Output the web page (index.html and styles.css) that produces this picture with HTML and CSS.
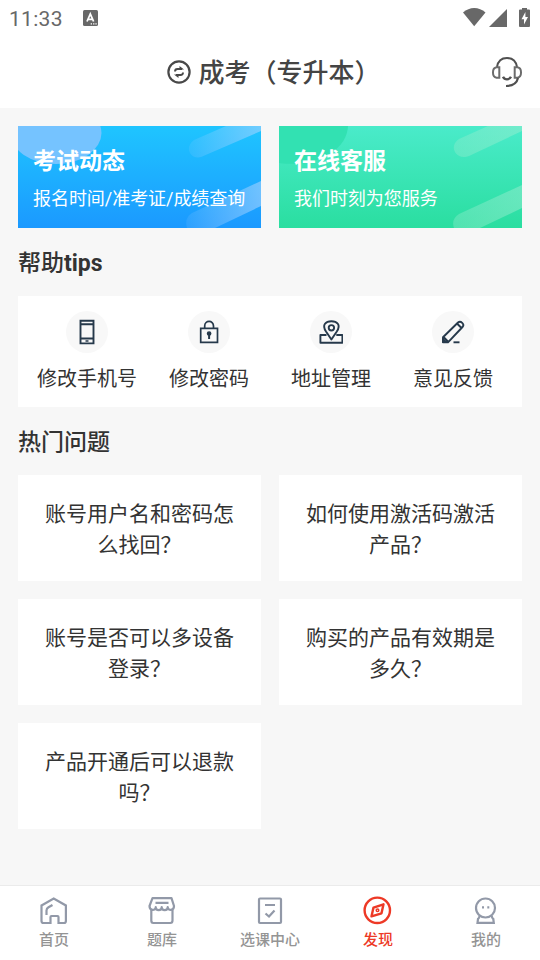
FILE: index.html
```html
<!DOCTYPE html>
<html lang="zh-CN">
<head>
<meta charset="utf-8">
<title>发现</title>
<link rel="stylesheet" href="styles.css">
</head>
<body>
<div class="app">
  <div class="status">
    <span class="time">11:33</span>
    <svg class="ime" width="15" height="16" viewBox="0 0 15 16"><rect width="15" height="16" rx="1.5" fill="#686868"/><path d="M4 11.5L7.3 4L10.6 11.5M5.2 9.3H9.4" fill="none" stroke="#fff" stroke-width="1.8"/><path d="M7.7 13.2h1.3v1.3H7.7zM10.1 13.2h1.3v1.3h-1.3zM12.4 13.2h1.3v1.3h-1.3z" fill="#fff"/></svg>
    <svg class="signals" width="68" height="20" viewBox="0 0 68 20" fill="#686868"><path d="M0 5.5C6.5-.5 16-.5 22.5 5.500L11.200 19.300z"/><path d="M44 2V20H26z"/><path d="M59 1h5v1.500h2q1 0 1 1V19q0 1-1 1h-9q-1 0-1-1V3.500q0-1 1-1h2z"/><path d="M62.400 5L58.500 12.200h2.500v5.300L65 10h-2.600z" fill="#fff"/></svg>
  </div>
  <header class="header">
    <svg class="swap" width="24" height="24" viewBox="0 0 24 24" fill="none" stroke="#484848" stroke-width="2.200"><circle cx="12" cy="12" r="10.600"/><path d="M8 11.500Q8 9 10.500 9H15M16 12.500Q16 15 13.500 15H9" stroke-width="1.900"/><path d="M12.500 6l4.500 3.500h-4.500zM11.500 18L7 14.500h4.500z" fill="#484848" stroke="none"/></svg>
    <h1>成考（专升本）</h1>
    <svg class="headset" width="32" height="32" viewBox="0 0 32 32" fill="none" stroke="#505050" stroke-width="2"><path d="M6 11C7 5 10.500 2 16 2S25 5 26 11"/><path d="M8.300 11.300H5.500C.8 12 .8 21 5.500 21.700h2.800zM23.700 11.300h2.800c4.700.7 4.700 9.700 0 10.400h-2.800z" stroke="#6c6c6c"/><path d="M12 20.800c1.700 3.400 6.300 3.400 8 0" stroke-width="2.400"/><path d="M27 22c-1.200 5.200-5 8-12 8" stroke-width="2.200"/></svg>
  </header>
  <main class="main">
    <div class="banners">
      <section class="banner">
        <svg class="art" width="243" height="102" viewBox="0 0 243 102"><defs><linearGradient id="blue" x2="0" y2="1"><stop stop-color="#1fc5ff"/><stop offset="1" stop-color="#1b99ff"/></linearGradient><linearGradient id="ray"><stop stop-color="#a8d2ff" stop-opacity=".12"/><stop offset="1" stop-color="#a8d2ff" stop-opacity=".6"/></linearGradient></defs><rect width="243" height="102" fill="url(#blue)"/><ellipse cx="38" cy="7" rx="45.500" ry="31" fill="#75c3ff"/><path d="M176 14L208 0H243V5L183 31C172 34 166 21 176 14z" fill="url(#ray)"/><path d="M174 87L243 55V80L197 102H169Q166 92 174 87z" fill="url(#ray)"/></svg>
        <h2>考试动态</h2><p>报名时间/准考证/成绩查询</p>
      </section>
      <section class="banner">
        <svg class="art" width="243" height="102" viewBox="0 0 243 102"><defs><linearGradient id="green" x2="0" y2="1"><stop stop-color="#4aebca"/><stop offset="1" stop-color="#2adea0"/></linearGradient><linearGradient id="mint"><stop stop-color="#9aedcf" stop-opacity=".35"/><stop offset="1" stop-color="#9aedcf" stop-opacity=".5"/></linearGradient></defs><rect width="243" height="102" fill="url(#green)"/><path d="M0 0H69C68 24 38 42 0 37z" fill="#32e1b2"/><path d="M180 13L209 0H243V5L190 30C177 35 169 20 180 13z" fill="url(#mint)"/><path d="M180 88L243 59V82L201 102H175Q172 93 180 88z" fill="url(#mint)"/></svg>
        <h2>在线客服</h2><p>我们时刻为您服务</p>
      </section>
    </div>
    <h3>帮助<b>tips</b></h3>
    <div class="tips">
      <div class="tip"><span class="disc"><svg width="24" height="26" viewBox="0 0 24 26" fill="none" stroke="#26394b" stroke-width="1.900"><path d="M5.500 1.800h13v22.600h-13zM5.500 5.200h13M5.500 19.500h13"/><path d="M10.500 22h3" stroke-width="1.500"/></svg></span><span>修改手机号</span></div>
      <div class="tip"><span class="disc"><svg width="24" height="26" viewBox="0 0 24 26" fill="none" stroke="#26394b" stroke-width="1.700"><path d="M3.700 9.300h16.800v14H3.700zM7.700 9V7C7.700.9 16.500.9 16.500 7v2"/><circle cx="12.100" cy="14.500" r="1.500" fill="#26394b"/><path d="M12.100 15v5" stroke-width="2"/></svg></span><span>修改密码</span></div>
      <div class="tip"><span class="disc"><svg width="24" height="26" viewBox="0 0 24 26" fill="none" stroke="#26394b" stroke-width="1.900" stroke-linejoin="round"><path d="M7.500 16H1.400v7.800h22V16h-6.100"/><path d="M12.400 20.500L7 12.500C2.500 5.500 7 2.200 12.400 2.200s9.900 3.300 5.400 10.300z"/><circle cx="12.400" cy="8.800" r="2.700"/></svg></span><span>地址管理</span></div>
      <div class="tip"><span class="disc"><svg width="24" height="26" viewBox="0 0 24 26" fill="none" stroke="#26394b" stroke-width="1.900" stroke-linejoin="round"><path d="M2 23.300v-5L17 3.500c2.700-2.500 7 1.800 4.500 4.500L7 23.300zM16 4.500l4.500 4.500M2.500 18l5 5"/><path d="M2 20l3 3H2z" fill="#26394b"/><path d="M12.500 23.300H18.500"/></svg></span><span>意见反馈</span></div>
    </div>
    <h3>热门问题</h3>
    <div class="questions">
      <div class="question">账号用户名和密码怎么找回？</div>
      <div class="question">如何使用激活码激活产品？</div>
      <div class="question">账号是否可以多设备登录？</div>
      <div class="question">购买的产品有效期是多久？</div>
      <div class="question">产品开通后可以退款吗？</div>
    </div>
  </main>
  <nav class="nav">
    <div class="tab"><svg width="30" height="30" viewBox="0 0 30 30" fill="none" stroke="#9299a8" stroke-width="2.200"><path d="M2.500 9.500L14.700 2.500L26.900 9.500V25Q26.900 27 25 27H19.500v-6q0-1-1-1h-6q-1 0-1 1v6H4.500Q2.500 27 2.500 25z"/><path d="M7.500 19v-4.500q0-2 2-3.200L13.500 9"/></svg><span>首页</span></div>
    <div class="tab"><svg width="30" height="30" viewBox="0 0 30 30" fill="none" stroke="#9299a8" stroke-width="2.200"><path d="M5.500 2.200h19l2.500 7.800c0 5-6 5-6.300 1.200c0 3.800-6 3.800-6 0c0 3.800-6 3.800-6 0C8.500 15 2.500 15 2.500 10z" stroke-linejoin="round"/><path d="M8.500 6.800h13M4.300 14v10.500q0 2.500 2 2.500h17q2.200 0 2.200-2.500V14"/></svg><span>题库</span></div>
    <div class="tab"><svg width="30" height="30" viewBox="0 0 30 30" fill="none" stroke="#9299a8" stroke-width="2.200"><rect x="4" y="2.500" width="22" height="24.500" rx="1"/><path d="M10 9h10M10.500 17.500l3.500 3 5.500-6"/></svg><span>选课中心</span></div>
    <div class="tab active"><svg width="30" height="30" viewBox="0 0 30 30" fill="none" stroke="#ed3926" stroke-width="2.400"><circle cx="14.300" cy="14.300" r="12.700"/><path d="M8.500 20.300l2-8.700 10-3.300-2 9z" stroke-linejoin="round"/><circle cx="14.500" cy="14.300" r="1.300" stroke-width="1.500"/></svg><span>发现</span></div>
    <div class="tab"><svg width="30" height="30" viewBox="0 0 30 30" fill="none" stroke="#9299a8" stroke-width="2.200"><circle cx="14.500" cy="12" r="9.500"/><path d="M8.500 20q0 2-1.500 3l-.5 3.900h16.300l-.5-3.900q-1.500-1-1.500-3"/><path d="M11 11.300h2M16.300 11.300h2"/></svg><span>我的</span></div>
  </nav>
</div>
</body>
</html>
```
FILE: styles.css
```css
* { box-sizing: border-box; margin: 0; padding: 0; }
body { background: #f7f7f7; color: #333; font-family: Roboto, "Noto Sans CJK SC", sans-serif; }
svg { display: block; flex: none; }
.app { display: flex; flex-direction: column; width: 540px; height: 960px; overflow: hidden; }
.status { display: flex; align-items: center; height: 36px; padding: 0 9px 0 9px; background: #fff; }
.time { width: 74px; padding-top: 2px; color: #686868; font-size: 21px; letter-spacing: .3px; }
.signals { margin: -3px 0 0 auto; }
.header { display: flex; align-items: center; height: 72px; padding-left: 166.5px; background: #fff; }
.header h1 { margin-left: 8px; padding-top: 2px; color: #444; font-size: 26px; line-height: 40px; font-weight: 500; white-space: nowrap; }
.headset { margin-left: auto; margin-right: 17px; }
.main { flex: 1; padding: 18px 18px 0; }
.banners { display: grid; grid-template-columns: 1fr 1fr; gap: 18px; }
.banner { position: relative; height: 102px; padding: 19px 15px 0; color: #fff; overflow: hidden; }
.art { position: absolute; inset: 0; }
.banner h2, .banner p { position: relative; white-space: nowrap; }
.banner h2 { font-size: 23px; line-height: 34px; font-weight: 700; }
.banner p { margin-top: 7px; font-size: 18px; line-height: 26px; letter-spacing: -.05px; }
h3 { height: 68px; padding-top: 19px; font-size: 23px; line-height: 34px; font-weight: 500; }
h3 b { font-weight: 700; }
.tips { display: flex; height: 111px; padding: 15px 8px 0; background: #fff; }
.tip { flex: 1; display: flex; flex-direction: column; align-items: center; font-size: 20px; line-height: 30px; white-space: nowrap; }
.disc { display: flex; align-items: center; justify-content: center; width: 42px; height: 42px; margin-bottom: 11px; border-radius: 50%; background: #f8f8f8; }
.questions { display: grid; grid-template-columns: 1fr 1fr; gap: 18px; }
.question { height: 106px; padding: 24px 27px 0; background: #fff; font-size: 21px; line-height: 31px; text-align: center; }
.nav { display: flex; height: 75px; border-top: 1px solid #ebebeb; background: #fff; }
.tab { flex: 1; display: flex; flex-direction: column; align-items: center; padding-top: 10px; color: #949494; font-size: 15px; line-height: 22px; font-weight: 500; }
.tab span { margin-top: 3px; }
.active { color: #ed3926; }
```
